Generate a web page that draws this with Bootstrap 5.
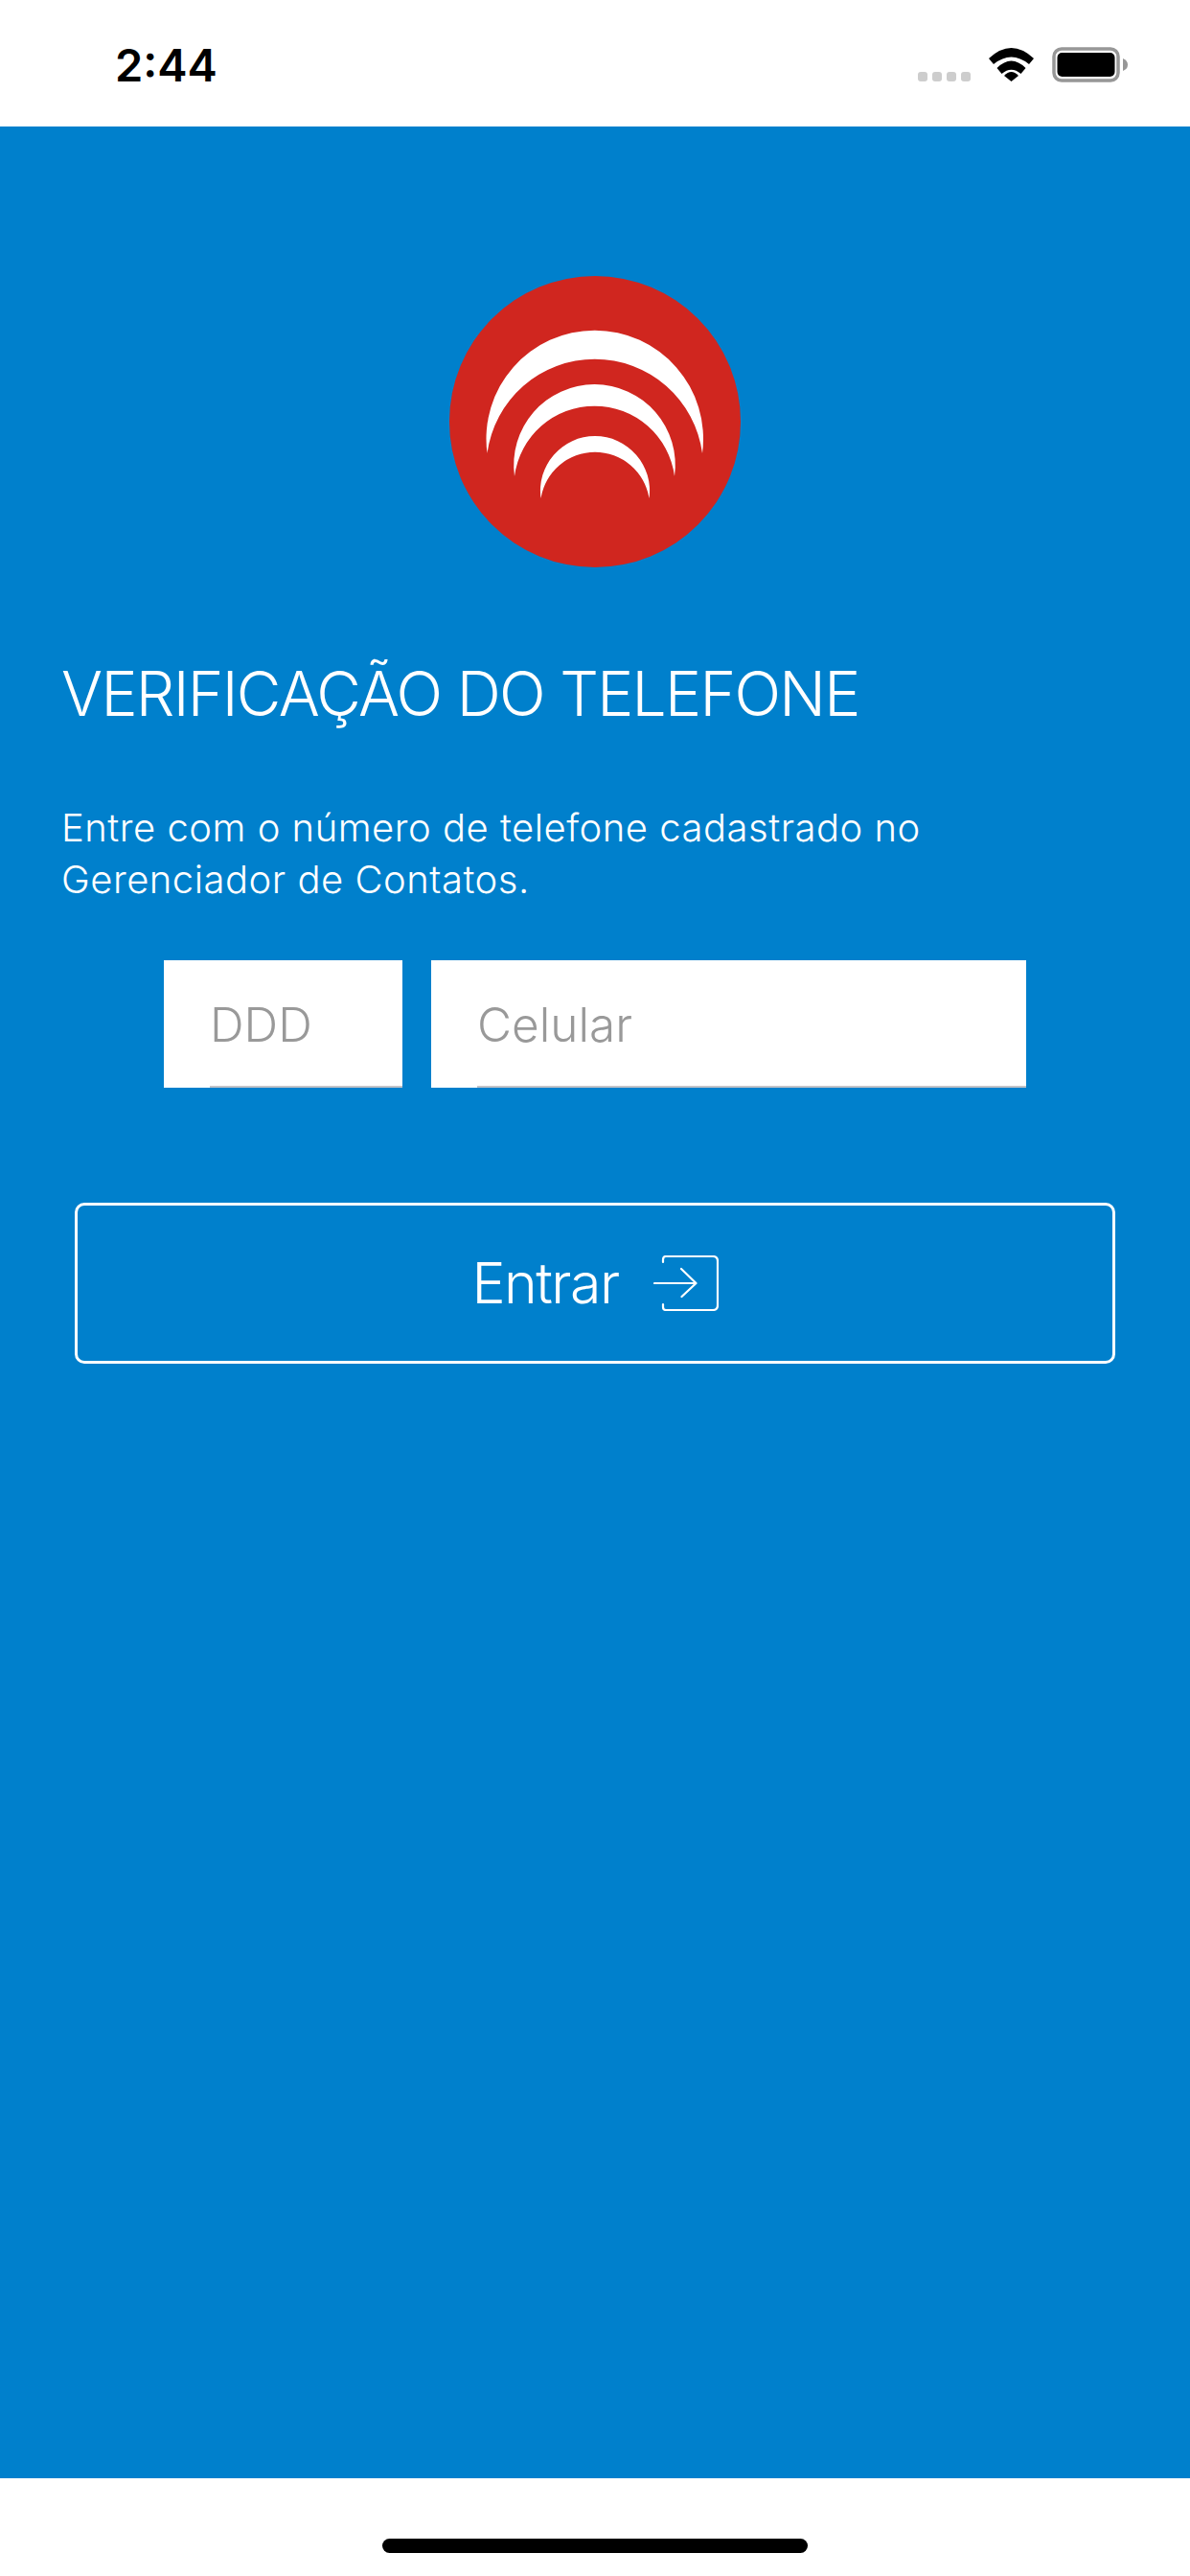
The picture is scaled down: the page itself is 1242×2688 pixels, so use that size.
<!DOCTYPE html>
<html lang="pt-BR">
<head>
    <meta charset="UTF-8">
    <meta name="viewport" content="width=device-width, initial-scale=1.0">
    <title>Verificação do telefone</title>
    <link rel="stylesheet" href="https://cdn.jsdelivr.net/npm/bootstrap@5.3.0/dist/css/bootstrap.min.css">
    <style>
        html, body {
            height: 2688px;
            overflow: hidden;
        }
        body {
            background-color: #fff;
            font-family: Inter, "Liberation Sans", sans-serif;
        }
        .app-screen {
            width: 1242px;
            height: 2688px;
        }
        .status-strip {
            height: 132px;
            padding: 44px 65px 0 120px;
        }
        .clock {
            font-weight: 600;
            font-size: 47px;
            line-height: 48px;
            color: #000;
        }
        .status-icons {
            margin-top: 5px;
        }
        .signal-dots {
            gap: 5px;
            margin-top: 26px;
            margin-right: 19px;
        }
        .signal-dots span {
            width: 10px;
            height: 10px;
            border-radius: 3px;
            background-color: #cdcdcd;
        }
        .wifi-icon {
            margin-top: 1px;
            margin-right: 19px;
        }
        .blue-area {
            height: 2454px;
            background-color: #0080cc;
            color: #fff;
        }
        .logo-wrap {
            padding-top: 156px;
        }
        .page-title {
            margin: 96px 0 0 64px;
            font-size: 64px;
            line-height: 72px;
            font-weight: 300;
            letter-spacing: -1.7px;
        }
        .page-help {
            margin: 77px 0 0 64px;
            font-size: 40px;
            line-height: 54px;
            font-weight: 300;
            letter-spacing: 0.5px;
        }
        .phone-row {
            margin: 57px 0 0 171px;
            gap: 30px;
        }
        .phone-input {
            height: 133px;
            padding: 0 0 0 48px;
            border: 0;
            border-radius: 0;
            outline: 0;
            background: #fff linear-gradient(#c3c3c8, #c3c3c8) no-repeat 48px 100% / 100% 2px;
            font-size: 49.5px;
            font-weight: 300;
            color: #999;
        }
        .phone-input::placeholder {
            color: #999;
            opacity: 1;
        }
        .ddd-input {
            width: 249px;
        }
        .cel-input {
            width: 621px;
        }
        .enter-btn {
            display: flex;
            width: 1086px;
            height: 168px;
            margin: 120px 0 0 78px;
            border: 3px solid #fff;
            border-radius: 10px;
            color: #fff;
            font-size: 59px;
            font-weight: 300;
            letter-spacing: -1.5px;
            gap: 36px;
        }
        .enter-btn:hover {
            color: #fff;
            border-color: #fff;
        }
        .home-bar {
            width: 444px;
            height: 15px;
            margin: 63px auto 0;
            border-radius: 8px;
            background-color: #000;
        }
    </style>
</head>
<body>
    <div class="app-screen d-flex flex-column">
        <div class="status-strip d-flex justify-content-between align-items-start">
            <span class="clock">2:44</span>
            <div class="status-icons d-flex align-items-start">
                <div class="signal-dots d-flex"><span></span><span></span><span></span><span></span></div>
                <svg class="wifi-icon" width="47" height="35" viewBox="0 0 47 35" fill="#000">
                    <path d="M0 11 Q23.5 -11 47 11 L42 17 Q23.5 2 5 17 Z"/>
                    <path d="M8.500 21 Q23.5 6 38.5 21 L33.5 27 Q23.5 18.500 13.500 27 Z"/>
                    <path d="M16 29 Q23.5 21 31 29 L23.5 35 Z"/>
                </svg>
                <svg width="79" height="37" viewBox="0 0 79 37">
                    <rect x="2" y="2" width="67" height="33" rx="8" fill="none" stroke="#979797" stroke-width="3.500"/>
                    <rect x="5.500" y="6" width="60" height="25" rx="5" fill="#000"/>
                    <path d="M74 12 Q79 14 79 18.500 Q79 23 74 25 Z" fill="#979797"/>
                </svg>
            </div>
        </div>

        <div class="blue-area d-flex flex-column">
            <div class="logo-wrap d-flex justify-content-center">
                <svg width="304" height="304" viewBox="0 0 304 304">
                    <circle cx="152" cy="152" r="152" fill="#d0261f"/>
                    <!-- tres arcos do logo -->
                    <path d="M39.500 185 A113.25 113.25 0 1 1 264 185 A113.25 113.25 0 0 0 39.500 185 Z" fill="#fff"/>
                    <path d="M68 209 A84.3 84.3 0 1 1 235 209 A84.2 84.2 0 0 0 68 209 Z" fill="#fff"/>
                    <path d="M95.500 232 A57.05 57.05 0 1 1 208.500 232 A57.2 57.2 0 0 0 95.500 232 Z" fill="#fff"/>
                </svg>
            </div>
            <h1 class="page-title">VERIFICAÇÃO DO TELEFONE</h1>
            <p class="page-help mb-0">Entre com o número de telefone cadastrado no<br>Gerenciador de Contatos.</p>
            <div class="phone-row d-flex">
                <input class="phone-input ddd-input" type="text" placeholder="DDD">
                <input class="phone-input cel-input" type="text" placeholder="Celular">
            </div>
            <button type="button" class="btn enter-btn align-items-center justify-content-center p-0">
                <span>Entrar</span>
                <svg width="68" height="58" viewBox="0 0 68 58" fill="none" stroke="#fff" stroke-width="2.200" stroke-linecap="round" stroke-linejoin="round">
                    <path d="M1 29 H44.500 M29 14 L44.500 29 L29.500 43"/>
                    <path d="M10 7 V4.500 Q10 1 13 1 H62 Q67 1 67 6 V52 Q67 57 62 57 H13 Q10 57 10 54 V51"/>
                </svg>
            </button>
        </div>

        <div class="flex-grow-1">
            <div class="home-bar"></div>
        </div>
    </div>
    <script src="https://cdn.jsdelivr.net/npm/bootstrap@5.3.0/dist/js/bootstrap.bundle.min.js"></script>
</body>
</html>
